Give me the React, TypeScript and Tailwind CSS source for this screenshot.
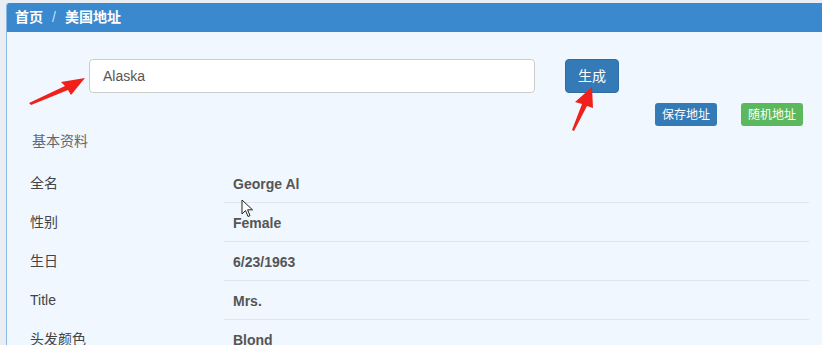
import React from "react";

const rows = [
  ["全名", "George Al"],
  ["性别", "Female"],
  ["生日", "6/23/1963"],
  ["Title", "Mrs."],
  ["头发颜色", "Blond"],
];

export default function App() {
  return (
    <div
      className="w-[822px] h-[345px] overflow-hidden bg-[#e8eef4] pl-[6px] pt-[3px]"
      style={{ fontFamily: '"Liberation Sans", Arial, "Noto Sans CJK SC", sans-serif' }}
    >
      <div className="relative h-full bg-[#f0f7fe] border-l border-[#8fb8de] rounded-tl-[3px] overflow-hidden">
        <div className="h-[29px] bg-[#3a88ce] flex items-center pl-[8px] text-white text-[14px] font-bold">
          <span>首页</span>
          <span className="mx-[9px] font-normal text-[#c9def2]">/</span>
          <span>美国地址</span>
        </div>
        <div className="pt-[27px] pr-[13px]">
          <div className="flex items-center">
            <div className="ml-[82px] w-[446px] h-[34px] bg-white border border-[#ccc] rounded-[4px] flex items-center pl-[13px] text-[14px] text-[#555]">
              Alaska
            </div>
            <div className="ml-[30px] w-[54px] h-[34px] bg-[#337ab7] border border-[#2e6da4] rounded-[4px] flex items-center justify-center text-white text-[14px]">
              生成
            </div>
          </div>
          <div className="flex justify-end gap-[24px] mt-[10px] pr-[6px]">
            <div className="w-[62px] h-[23px] bg-[#337ab7] rounded-[3px] flex items-center justify-center text-white text-[12px]">
              保存地址
            </div>
            <div className="w-[62px] h-[23px] bg-[#5cb85c] rounded-[3px] flex items-center justify-center text-white text-[12px]">
              随机地址
            </div>
          </div>
          <div className="ml-[25px] h-[30px] flex items-center text-[14px] text-[#666]">
            基本资料
          </div>
          <div className="ml-[23px] mt-[8px]">
            {rows.map(([l, v], i) => (
              <div key={i} className="flex h-[39px]">
                <div className="w-[194px] flex items-center text-[14px] text-[#444]">{l}</div>
                <div className="flex-1 flex items-center pl-[9px] pt-[2px] border-b border-[#dde5ee] text-[14px] font-bold text-[#555]">
                  {v}
                </div>
              </div>
            ))}
          </div>
        </div>

        {/* red arrow 1 */}
        <svg className="absolute left-[7px] top-[65px]" width="80" height="40" viewBox="0 0 80 40">
          <polygon points="15,35 51,18 47,14 71,10 57,27 54,22 17,37" fill="#f0201a" />
        </svg>
        {/* red arrow 2 */}
        <svg className="absolute left-[549px] top-[77px]" width="40" height="52" viewBox="0 0 40 52">
          <polygon points="16,50 26,24 19,22 36,7 37,28 31,26 18,51" fill="#f0201a" />
        </svg>
        {/* cursor */}
        <svg className="absolute left-[234px] top-[196px]" width="14" height="20" viewBox="0 0 14 20">
          <path d="M1 1 L1 15 L4.5 11.5 L7 17.5 L9 16.6 L6.6 10.8 L11.5 10.8 Z" fill="#fff" stroke="#222" strokeWidth="1" strokeLinejoin="round" />
        </svg>
      </div>
    </div>
  );
}
